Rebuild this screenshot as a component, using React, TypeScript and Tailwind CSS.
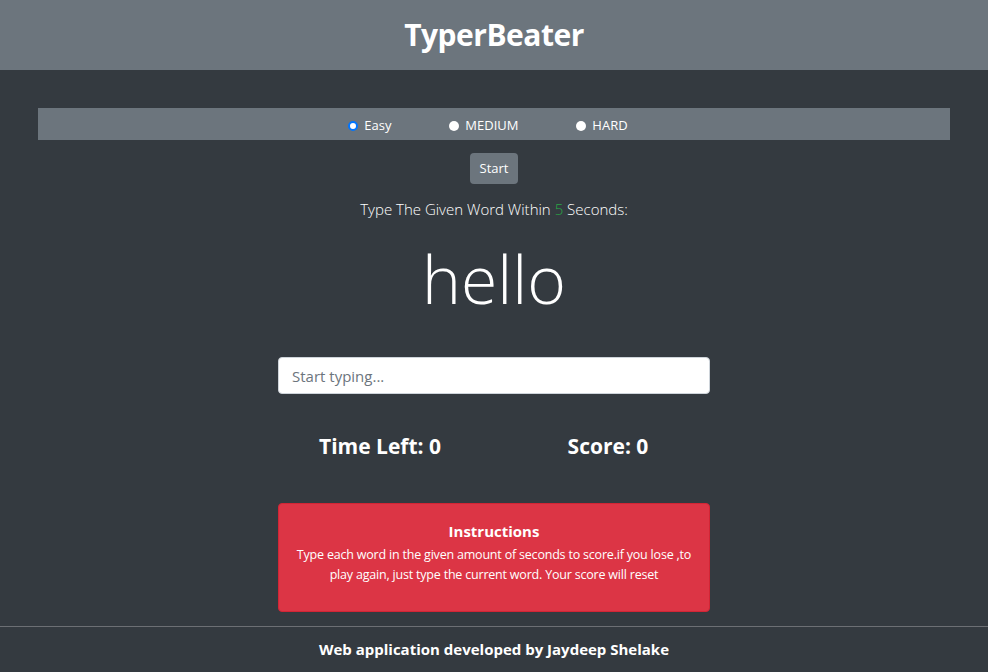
import React from "react";

const font = { fontFamily: '"Open Sans", "Noto Sans", sans-serif' };

function Radio({ checked, label }: { checked?: boolean; label: string }) {
  return (
    <label className="flex items-center gap-[6px]">
      {checked ? (
        <span className="w-[10px] h-[10px] rounded-full bg-white border-[2px] border-[#0075ff] box-border" />
      ) : (
        <span className="w-[10px] h-[10px] rounded-full bg-white" />
      )}
      <span className="text-[13px] text-white">{label}</span>
    </label>
  );
}

export default function App() {
  return (
    <div className="min-h-[672px] bg-[#343a40] text-white flex flex-col" style={font}>
      <header className="h-[70px] bg-[#6c757d] flex items-center justify-center">
        <h1 className="text-[30px] font-bold leading-none tracking-[-0.5px]">TyperBeater</h1>
      </header>
      <main className="flex flex-col items-center flex-1">
        <div className="mt-[38px] self-stretch mx-[38px] h-[32px] pt-[3px] bg-[#6c757d] flex items-center justify-center">
          <div className="flex items-center ml-[-12px]">
            <div className="w-[101px]"><Radio checked label="Easy" /></div>
            <div className="w-[127px]"><Radio label="MEDIUM" /></div>
            <div><Radio label="HARD" /></div>
          </div>
        </div>
        <button className="mt-[13px] w-[48px] h-[31px] pt-[1px] rounded-[4px] bg-[#6c757d] text-[13px] text-white">Start</button>
        <p className="mt-[14px] text-[15px] font-light leading-[22px]">
          Type The Given Word Within <span className="text-[#28a745]">5</span> Seconds:
        </p>
        <div className="mt-[16px] text-[66px] font-light leading-[84px]">hello</div>
        <input
          className="mt-[37px] w-[432px] h-[37px] rounded-[4px] bg-white border border-[#ced4da] px-[13px] text-[15px] text-[#495057] placeholder:text-[#6c757d] outline-none"
          placeholder="Start typing..."
        />
        <div className="mt-[37px] w-[456px] grid grid-cols-2 text-center text-[21px] font-bold leading-[30px]">
          <div>Time Left: 0</div>
          <div>Score: 0</div>
        </div>
        <div className="mt-[42px] w-[432px] h-[109px] rounded-[4px] bg-[#dc3545] border border-[#d32535] flex flex-col items-center pt-[16px] px-[10px] text-center">
          <div className="text-[15px] font-bold leading-[22px]">Instructions</div>
          <p className="text-[12.5px] leading-[20px] mt-[3px] tracking-[-0.2px] whitespace-nowrap">
            Type each word in the given amount of seconds to score.if you lose ,to
            <br />
            play again, just type the current word. Your score will reset
          </p>
        </div>
      </main>
      <footer className="mt-[8px] border-t border-[#6c6f74] h-[46px] flex items-center justify-center">
        <span className="text-[15px] font-bold">Web application developed by Jaydeep Shelake</span>
      </footer>
    </div>
  );
}
